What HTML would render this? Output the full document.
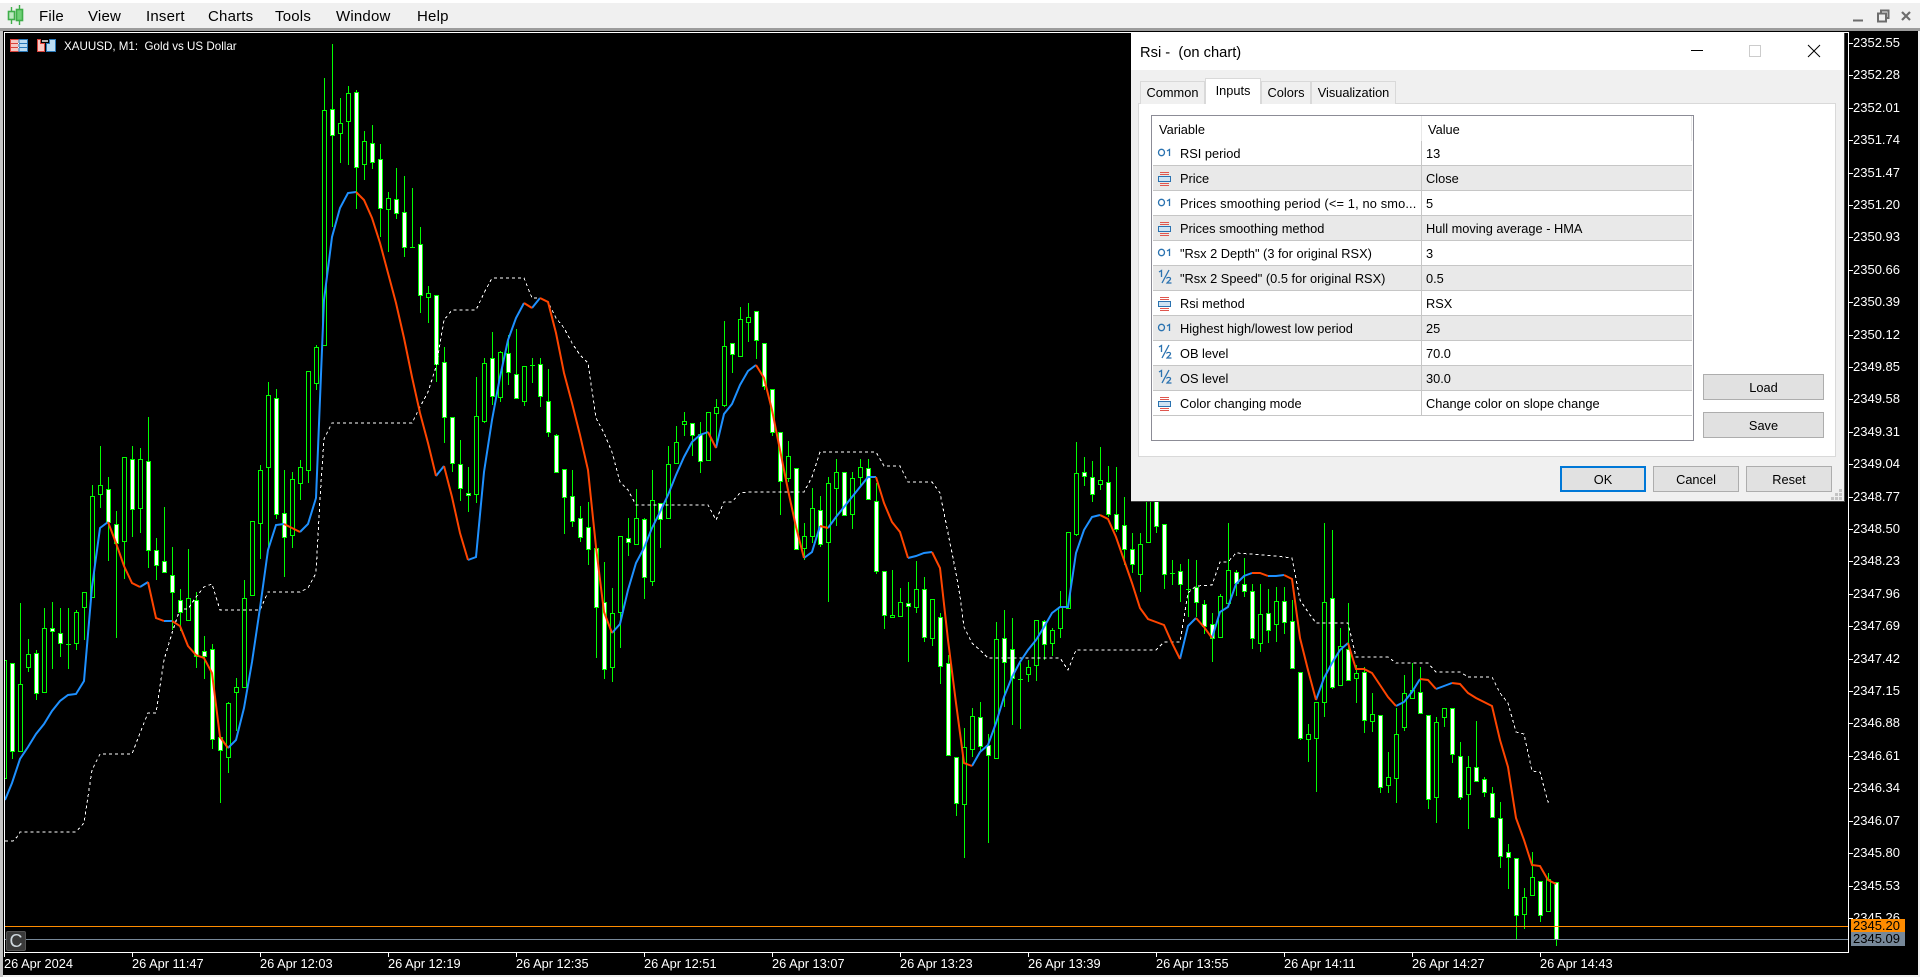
<!DOCTYPE html>
<html>
<head>
<meta charset="utf-8">
<title>XAUUSD M1</title>
<style>
html,body{margin:0;padding:0;width:1920px;height:977px;overflow:hidden;background:#f0f0f0;font-family:"Liberation Sans",sans-serif}
.a{position:absolute}
.m{position:absolute;top:8px;font-size:15px;line-height:18px;color:#000;letter-spacing:.2px}
.p{position:absolute;left:1853px;font-size:13px;line-height:14px;color:#fff;white-space:pre}
.pt{position:absolute;left:1849px;width:4px;height:1px;background:#fff}
.t{position:absolute;top:957px;font-size:12.8px;line-height:14px;color:#fff;white-space:pre}
.tt{position:absolute;top:953px;width:1px;height:4px;background:#fff}
.r{position:absolute;left:1153px;width:539px;height:24px;border-bottom:1px solid #c6c6c6;font-size:12.8px;line-height:24px;color:#000;white-space:pre}
.r .n{position:absolute;left:27px;top:1px}
.r .v{position:absolute;left:273px;top:1px}
.r svg{position:absolute;left:4px;top:2px}
.r svg.o{top:3px}
.r svg.h{top:0}
.g{background:#e9e9e9}
.b{position:absolute;box-sizing:border-box;background:#e1e1e1;border:1px solid #adadad;font-size:12.8px;line-height:26px;text-align:center;color:#000}
.tab{position:absolute;box-sizing:border-box;border:1px solid #d9d9d9;border-bottom:none;font-size:12.8px;text-align:center;color:#000;background:#f0f0f0}
</style>
</head>
<body>
<div class="a" style="left:0;top:0;width:1920px;height:3px;background:#fff"></div>
<div class="a" style="left:0;top:28px;width:1920px;height:3px;background:#9c9c9c"></div>
<div class="a" style="left:0;top:31px;width:1918px;height:944px;background:#000"></div>
<div class="a" style="left:0;top:31px;width:3px;height:946px;background:#c4c4c4"></div>

<!-- menu -->
<svg class="a" style="left:6px;top:3px" width="20" height="24" viewBox="0 0 20 24"><path d="M5.5 4V21M13.5 2V22" stroke="#3fae49" stroke-width="1.4" fill="none"/><rect x="2.5" y="8.5" width="6" height="8" fill="#bfe8c2" stroke="#3fae49" stroke-width="1.6"/><rect x="10.5" y="6.5" width="6" height="11" fill="#6fcf76" stroke="#3fae49" stroke-width="1.6"/></svg>
<div class="m" style="left:39px">File</div>
<div class="m" style="left:88px">View</div>
<div class="m" style="left:146px">Insert</div>
<div class="m" style="left:208px">Charts</div>
<div class="m" style="left:275px">Tools</div>
<div class="m" style="left:336px">Window</div>
<div class="m" style="left:417px">Help</div>
<svg class="a" style="left:1850px;top:5px" width="66" height="20" viewBox="0 0 66 20"><path d="M3 15.5H13" stroke="#6d6d6d" stroke-width="2" fill="none"/><path d="M28 8.5H36V16.5H28ZM31 8V5.5H38.5V13H36" stroke="#6d6d6d" stroke-width="2" fill="none"/><path d="M52 7L60 15M60 7L52 15" stroke="#6d6d6d" stroke-width="2.2" fill="none"/></svg>

<!-- chart -->
<svg class="a" style="left:0;top:0" width="1920" height="977" viewBox="0 0 1920 977">
<path fill="none" stroke="#0f0" stroke-width="1" shape-rendering="crispEdges" d="M4.5 645V790M12.5 663V759M20.5 603V751M28.5 639V672M36.5 650V700M44.5 608V692M52.5 602V669M60.5 608V657M68.5 608V669M66 644.5h5M76.5 610V650M84.5 592V640M92.5 485V597M100.5 446V508M108.5 477V561M116.5 511V638M124.5 457V579M132.5 446V537M140.5 448V533M148.5 417V568M156.5 538V580M164.5 507V572M172.5 547V630M180.5 589V631M188.5 549V620M196.5 592V668M204.5 636V679M212.5 644V749M220.5 737V803M228.5 702V773M236.5 678V731M244.5 580V687M252.5 521V595M260.5 465V559M268.5 382V550M276.5 389V519M284.5 470V577M292.5 472V548M300.5 460V500M308.5 371V483M316.5 345V390M324.5 78V345M332.5 44V227M340.5 98V163M348.5 86V165M356.5 90V209M364.5 131V180M372.5 125V169M380.5 144V237M388.5 192V252M396.5 168V219M404.5 176V257M412.5 188V248M410 247.5h5M420.5 227V313M428.5 286V323M436.5 295V382M444.5 347V443M452.5 417V472M460.5 440V501M468.5 467V512M476.5 377V503M484.5 358V423M492.5 332V405M500.5 351V402M508.5 335V385M516.5 329V398M524.5 366V406M532.5 358V383M530 365.5h5M540.5 358V407M548.5 369V437M556.5 434V472M564.5 469V534M572.5 470V527M580.5 506V542M588.5 502V565M596.5 548V658M604.5 562V679M612.5 588V682M620.5 536V648M628.5 518V556M636.5 489V544M644.5 518V599M652.5 470V586M660.5 503V548M668.5 446V518M676.5 426V463M684.5 412V436M692.5 423V456M700.5 422V473M708.5 412V460M716.5 399V448M724.5 321V407M732.5 343V373M740.5 307V356M748.5 303V342M756.5 311V359M764.5 343V390M772.5 389V436M780.5 432V515M788.5 441V482M796.5 468V549M804.5 523V560M812.5 488V543M820.5 496V547M828.5 477V602M836.5 459V526M844.5 472V515M852.5 472V529M860.5 459V486M868.5 459V499M876.5 483V574M884.5 571V629M892.5 570V616M900.5 588V617M908.5 582V662M916.5 561V613M924.5 577V642M932.5 599V646M940.5 613V684M948.5 655V755M956.5 757V816M964.5 728V858M972.5 708V757M980.5 702V752M988.5 734V843M996.5 622V758M1004.5 610V707M1012.5 618V725M1020.5 663V729M1018 679.5h5M1028.5 660V682M1036.5 620V681M1044.5 620V660M1052.5 628V656M1060.5 591V638M1068.5 532V608M1076.5 442V536M1084.5 457V486M1092.5 461V502M1100.5 447V490M1108.5 466V517M1116.5 467V532M1124.5 497V565M1132.5 533V573M1140.5 533V592M1148.5 477V542M1156.5 480V533M1164.5 524V589M1172.5 560V585M1170 573.5h5M1180.5 564V602M1188.5 559V617M1186 589.5h5M1196.5 560V617M1204.5 600V634M1212.5 613V662M1220.5 594V638M1228.5 523V603M1236.5 570V596M1244.5 558V597M1252.5 584V649M1260.5 584V652M1268.5 589V643M1276.5 587V642M1284.5 587V634M1292.5 600V668M1300.5 672V740M1308.5 724V762M1316.5 702V792M1324.5 523V717M1332.5 530V689M1340.5 628V685M1348.5 603V680M1356.5 665V703M1364.5 667V733M1372.5 693V732M1380.5 715V793M1388.5 752V793M1396.5 708V803M1404.5 675V731M1412.5 663V698M1420.5 667V713M1428.5 715V809M1436.5 717V823M1444.5 708V727M1452.5 708V763M1460.5 742V800M1468.5 756V829M1476.5 721V782M1484.5 777V797M1492.5 787V817M1500.5 802V868M1508.5 844V889M1516.5 858V939M1524.5 888V929M1532.5 852V895M1540.5 881V922M1548.5 873V911M1556.5 882V946"/>
<path fill="#000" stroke="#0f0" stroke-width="1" shape-rendering="crispEdges" d="M2.5 660.5h4v118h-4zM18.5 684.5h4v67h-4zM26.5 654.5h4v13h-4zM42.5 628.5h4v64h-4zM74.5 612.5h4v31h-4zM82.5 592.5h4v15h-4zM90.5 496.5h4v101h-4zM98.5 485.5h4v9h-4zM122.5 457.5h4v84h-4zM138.5 459.5h4v49h-4zM186.5 598.5h4v22h-4zM226.5 703.5h4v54h-4zM234.5 687.5h4v5h-4zM242.5 598.5h4v89h-4zM250.5 521.5h4v74h-4zM258.5 470.5h4v53h-4zM266.5 395.5h4v72h-4zM290.5 479.5h4v56h-4zM298.5 467.5h4v16h-4zM306.5 371.5h4v99h-4zM314.5 347.5h4v36h-4zM322.5 110.5h4v235h-4zM338.5 123.5h4v10h-4zM346.5 93.5h4v28h-4zM362.5 141.5h4v23h-4zM386.5 198.5h4v11h-4zM426.5 293.5h4v4h-4zM474.5 416.5h4v78h-4zM482.5 363.5h4v58h-4zM498.5 352.5h4v45h-4zM522.5 366.5h4v35h-4zM610.5 613.5h4v54h-4zM618.5 536.5h4v76h-4zM634.5 518.5h4v26h-4zM650.5 500.5h4v81h-4zM666.5 464.5h4v54h-4zM674.5 442.5h4v21h-4zM682.5 421.5h4v3h-4zM706.5 412.5h4v48h-4zM714.5 407.5h4v6h-4zM722.5 346.5h4v59h-4zM738.5 319.5h4v37h-4zM746.5 317.5h4v5h-4zM786.5 456.5h4v22h-4zM802.5 536.5h4v12h-4zM810.5 508.5h4v28h-4zM826.5 483.5h4v59h-4zM834.5 472.5h4v16h-4zM850.5 478.5h4v36h-4zM858.5 467.5h4v10h-4zM890.5 615.5h4v2h-4zM898.5 602.5h4v14h-4zM914.5 589.5h4v18h-4zM930.5 599.5h4v39h-4zM962.5 747.5h4v57h-4zM970.5 716.5h4v33h-4zM994.5 639.5h4v119h-4zM1026.5 667.5h4v7h-4zM1034.5 620.5h4v45h-4zM1050.5 630.5h4v13h-4zM1058.5 607.5h4v21h-4zM1066.5 532.5h4v76h-4zM1074.5 473.5h4v61h-4zM1098.5 480.5h4v4h-4zM1138.5 544.5h4v30h-4zM1146.5 477.5h4v65h-4zM1218.5 596.5h4v41h-4zM1226.5 570.5h4v33h-4zM1258.5 614.5h4v29h-4zM1274.5 601.5h4v23h-4zM1306.5 734.5h4v5h-4zM1314.5 702.5h4v36h-4zM1322.5 602.5h4v100h-4zM1338.5 646.5h4v39h-4zM1354.5 673.5h4v5h-4zM1370.5 714.5h4v7h-4zM1386.5 777.5h4v8h-4zM1394.5 734.5h4v44h-4zM1402.5 693.5h4v34h-4zM1410.5 690.5h4v8h-4zM1434.5 722.5h4v75h-4zM1442.5 708.5h4v9h-4zM1466.5 767.5h4v27h-4zM1522.5 897.5h4v17h-4zM1530.5 877.5h4v18h-4zM1546.5 879.5h4v32h-4z"/>
<path fill="#fff" stroke="#0f0" stroke-width="1" shape-rendering="crispEdges" d="M10.5 663.5h4v88h-4zM34.5 653.5h4v40h-4zM50.5 628.5h4v3h-4zM58.5 633.5h4v10h-4zM106.5 489.5h4v33h-4zM114.5 524.5h4v19h-4zM130.5 459.5h4v50h-4zM146.5 461.5h4v89h-4zM154.5 550.5h4v15h-4zM162.5 561.5h4v11h-4zM170.5 575.5h4v17h-4zM178.5 600.5h4v12h-4zM194.5 600.5h4v56h-4zM202.5 651.5h4v5h-4zM210.5 649.5h4v90h-4zM218.5 737.5h4v13h-4zM274.5 398.5h4v116h-4zM282.5 513.5h4v24h-4zM330.5 109.5h4v26h-4zM354.5 92.5h4v75h-4zM370.5 143.5h4v19h-4zM378.5 159.5h4v49h-4zM394.5 199.5h4v14h-4zM402.5 212.5h4v35h-4zM418.5 244.5h4v51h-4zM434.5 295.5h4v69h-4zM442.5 362.5h4v55h-4zM450.5 417.5h4v46h-4zM458.5 464.5h4v24h-4zM466.5 493.5h4v2h-4zM490.5 358.5h4v38h-4zM506.5 353.5h4v19h-4zM514.5 374.5h4v24h-4zM538.5 364.5h4v32h-4zM546.5 401.5h4v31h-4zM554.5 435.5h4v37h-4zM562.5 469.5h4v28h-4zM570.5 496.5h4v25h-4zM578.5 518.5h4v19h-4zM586.5 527.5h4v22h-4zM594.5 548.5h4v59h-4zM602.5 602.5h4v67h-4zM626.5 538.5h4v4h-4zM642.5 519.5h4v58h-4zM658.5 503.5h4v16h-4zM690.5 423.5h4v12h-4zM698.5 434.5h4v27h-4zM730.5 343.5h4v11h-4zM754.5 311.5h4v29h-4zM762.5 343.5h4v43h-4zM770.5 389.5h4v43h-4zM778.5 432.5h4v49h-4zM794.5 468.5h4v81h-4zM818.5 510.5h4v34h-4zM842.5 472.5h4v43h-4zM866.5 468.5h4v31h-4zM874.5 501.5h4v70h-4zM882.5 571.5h4v44h-4zM906.5 603.5h4v3h-4zM922.5 589.5h4v48h-4zM938.5 617.5h4v49h-4zM946.5 663.5h4v92h-4zM954.5 757.5h4v46h-4zM978.5 717.5h4v29h-4zM986.5 745.5h4v10h-4zM1002.5 638.5h4v24h-4zM1010.5 649.5h4v29h-4zM1042.5 621.5h4v23h-4zM1082.5 472.5h4v4h-4zM1090.5 477.5h4v17h-4zM1106.5 482.5h4v32h-4zM1114.5 514.5h4v15h-4zM1122.5 525.5h4v24h-4zM1130.5 549.5h4v15h-4zM1154.5 480.5h4v46h-4zM1162.5 524.5h4v50h-4zM1178.5 571.5h4v13h-4zM1194.5 587.5h4v15h-4zM1202.5 604.5h4v22h-4zM1210.5 624.5h4v14h-4zM1234.5 572.5h4v11h-4zM1242.5 584.5h4v7h-4zM1250.5 591.5h4v47h-4zM1266.5 613.5h4v17h-4zM1282.5 601.5h4v21h-4zM1290.5 621.5h4v47h-4zM1298.5 672.5h4v66h-4zM1330.5 598.5h4v89h-4zM1346.5 649.5h4v31h-4zM1362.5 672.5h4v48h-4zM1378.5 715.5h4v72h-4zM1418.5 692.5h4v21h-4zM1426.5 715.5h4v84h-4zM1450.5 708.5h4v46h-4zM1458.5 756.5h4v41h-4zM1474.5 767.5h4v14h-4zM1482.5 779.5h4v13h-4zM1490.5 793.5h4v24h-4zM1498.5 818.5h4v38h-4zM1506.5 852.5h4v5h-4zM1514.5 858.5h4v57h-4zM1538.5 881.5h4v34h-4zM1554.5 882.5h4v57h-4z"/>
<!-- dotted high/low line -->
<polyline fill="none" stroke="#fff" stroke-width="1" stroke-dasharray="3 3" shape-rendering="crispEdges" points="5,841 13,841 17,837 20,832 76,832 84,823 92,770 100,754 132,754 140,733 148,713 156,713 164,660 172,633 180,609 188,609 196,597 204,587 212,584 220,610 260,610 268,592 300,592 308,588 316,573 320,498 324,439 332,423 412,423 420,407 428,392 436,367 444,320 452,310 476,310 484,293 492,278 524,278 532,298 540,298 548,302 556,318 564,328 572,343 580,355 588,363 596,418 604,433 612,452 620,482 628,490 636,505 708,505 716,520 724,502 732,502 740,493 748,492 804,492 812,477 820,452 876,452 884,466 900,466 908,482 932,482 940,493 948,533 956,573 960,596 964,627 972,643 980,650 988,658 1060,658 1068,670 1076,650 1156,650 1164,642 1180,642 1188,593 1196,586 1212,585 1220,562 1228,562 1236,553 1276,556 1292,558 1300,600 1308,612 1316,623 1348,623 1356,657 1388,657 1396,663 1428,663 1436,672 1460,672 1468,677 1492,677 1500,693 1508,703 1516,732 1524,734 1532,771 1540,772 1548,802 1552,802"/>
<!-- blue segments -->
<path fill="none" stroke="#1e90ff" stroke-width="2" stroke-linejoin="miter" d="M5 800L12 783 20 759 28 747 36 734 44 724 52 711 60 701 68 695 76 694 84 681 92 587 100 528 108 522M140 587L148 582M164 621L172 621M228 748L236 740 244 708 252 662 260 608 268 550 276 525 284 524M300 532L308 524 316 498 324 300 332 237 340 208 348 193 356 192M436 476L444 466M468 560L476 557 484 472 492 420 500 377 508 340 516 318 524 303M532 308L540 298M612 633L620 624 628 590 636 563 644 548 652 528 660 512 668 495 676 475 684 457 692 442 700 435 708 432M716 448L724 414 732 404 740 385 748 371 756 365M804 558L812 552 820 526M828 528L836 517 844 507 852 497 860 487 868 477 876 477M908 558L916 556 924 553 932 552M972 766L980 752 988 745 996 723 1004 697 1012 677 1020 662 1028 650 1036 640 1044 627 1052 613 1060 607 1068 607 1076 553 1084 530 1092 517 1100 515M1180 659L1188 626 1196 618M1212 638L1220 612 1228 607 1236 584 1244 576 1252 573M1268 576L1276 576 1284 575M1316 700L1324 678 1332 663 1340 650 1348 643M1396 706L1404 702 1412 692 1420 679M1436 689L1444 686 1452 683"/>
<!-- orange segments -->
<path fill="none" stroke="#ff4500" stroke-width="2" stroke-linejoin="miter" d="M108 522L116 543 124 566 132 583 140 587M148 582L156 618 164 621M172 621L180 626 188 646 196 655 204 658 212 673 220 737 228 748M284 524L292 528 300 532M356 192L364 200 372 218 380 243 388 273 396 303 404 338 412 377 420 413 428 443 436 476M444 466L452 497 460 533 468 560M524 303L532 308M540 298L548 302 556 333 564 373 572 403 580 435 588 470 596 547 604 612 612 633M708 432L716 448M756 365L764 378 772 410 780 450 788 490 796 527 804 558M820 526L828 528M876 477L884 503 892 522 900 532 908 558M932 552L940 568 948 640 956 703 964 763 972 766M1100 515L1108 519 1116 537 1124 560 1132 583 1140 608 1148 619 1156 622 1164 625 1172 643 1180 659M1196 618L1204 627 1212 638M1252 573L1260 573 1268 576M1284 575L1292 579 1300 638 1308 670 1316 700M1348 643L1356 669 1364 669 1372 673 1380 685 1388 697 1396 706M1420 679L1428 680 1436 689M1452 683L1460 684 1468 693 1476 698 1484 702 1492 706 1500 740 1508 767 1516 818 1524 840 1532 865 1540 866 1548 880 1556 884"/>
</svg>

<!-- frame overlays -->
<div class="a" style="left:0;top:31px;width:3px;height:946px;background:#c4c4c4"></div>
<div class="a" style="left:3px;top:31px;width:1px;height:944px;background:#000"></div>
<div class="a" style="left:5px;top:926px;width:1843px;height:1px;background:#ff8c00"></div>
<div class="a" style="left:5px;top:939px;width:1843px;height:1px;background:#778899"></div>
<div class="a" style="left:4px;top:32px;width:1845px;height:1px;background:#fff"></div>
<div class="a" style="left:4px;top:32px;width:1px;height:921px;background:#fff"></div>
<div class="a" style="left:4px;top:952px;width:1845px;height:1px;background:#fff"></div>
<div class="a" style="left:1848px;top:32px;width:1px;height:921px;background:#fff"></div>

<!-- chart title -->
<svg class="a" style="left:9px;top:38px" width="50" height="16" viewBox="0 0 50 16"><rect x="1.5" y="1.5" width="17" height="12" fill="#f6c7c2" stroke="#d9433b"/><rect x="10" y="1.5" width="8.5" height="12" fill="#bcdcf2" stroke="#2a78b8"/><path d="M2 5.5H18M2 9.5H18" stroke="#fff" stroke-width="1"/><path d="M2 5.5H9M2 9.5H9" stroke="#d9433b" stroke-width="1"/><path d="M10 5.5H18M10 9.5H18" stroke="#2a78b8" stroke-width="1"/><path d="M28.5 13.5V1.5H31.5V5.5H35.5V13.5Z" fill="#f9c8c3" stroke="#d9433b"/><path d="M37.5 5.5H40.5V1.5H46.5V13.5H37.5Z" fill="#bcdcf2" stroke="#2a78b8"/><rect x="33" y="2" width="6" height="2" fill="#b5b5b5"/></svg>
<div class="a" style="left:64px;top:40px;font-size:11.6px;line-height:14px;color:#fff;white-space:pre">XAUUSD, M1:  Gold vs US Dollar</div>

<!-- C button -->
<div class="a" style="left:6px;top:931px;width:20px;height:20px;box-sizing:border-box;background:#3a3a3a;border:1px solid #555;border-radius:2px;color:#cfd8de;font-size:18px;line-height:18px;text-align:center">C</div>

<!-- time axis -->
<div class="tt" style="left:4px"></div><div class="tt" style="left:132px"></div><div class="tt" style="left:260px"></div><div class="tt" style="left:388px"></div><div class="tt" style="left:516px"></div><div class="tt" style="left:644px"></div><div class="tt" style="left:772px"></div><div class="tt" style="left:900px"></div><div class="tt" style="left:1028px"></div><div class="tt" style="left:1156px"></div><div class="tt" style="left:1284px"></div><div class="tt" style="left:1412px"></div><div class="tt" style="left:1540px"></div>
<div class="t" style="left:4px">26 Apr 2024</div>
<div class="t" style="left:132px">26 Apr 11:47</div>
<div class="t" style="left:260px">26 Apr 12:03</div>
<div class="t" style="left:388px">26 Apr 12:19</div>
<div class="t" style="left:516px">26 Apr 12:35</div>
<div class="t" style="left:644px">26 Apr 12:51</div>
<div class="t" style="left:772px">26 Apr 13:07</div>
<div class="t" style="left:900px">26 Apr 13:23</div>
<div class="t" style="left:1028px">26 Apr 13:39</div>
<div class="t" style="left:1156px">26 Apr 13:55</div>
<div class="t" style="left:1284px">26 Apr 14:11</div>
<div class="t" style="left:1412px">26 Apr 14:27</div>
<div class="t" style="left:1540px">26 Apr 14:43</div>

<!-- price axis -->
<div class="pt" style="top:43px"></div><div class="p" style="top:36px">2352.55</div>
<div class="pt" style="top:75px"></div><div class="p" style="top:68px">2352.28</div>
<div class="pt" style="top:108px"></div><div class="p" style="top:101px">2352.01</div>
<div class="pt" style="top:140px"></div><div class="p" style="top:133px">2351.74</div>
<div class="pt" style="top:173px"></div><div class="p" style="top:166px">2351.47</div>
<div class="pt" style="top:205px"></div><div class="p" style="top:198px">2351.20</div>
<div class="pt" style="top:237px"></div><div class="p" style="top:230px">2350.93</div>
<div class="pt" style="top:270px"></div><div class="p" style="top:263px">2350.66</div>
<div class="pt" style="top:302px"></div><div class="p" style="top:295px">2350.39</div>
<div class="pt" style="top:335px"></div><div class="p" style="top:328px">2350.12</div>
<div class="pt" style="top:367px"></div><div class="p" style="top:360px">2349.85</div>
<div class="pt" style="top:399px"></div><div class="p" style="top:392px">2349.58</div>
<div class="pt" style="top:432px"></div><div class="p" style="top:425px">2349.31</div>
<div class="pt" style="top:464px"></div><div class="p" style="top:457px">2349.04</div>
<div class="pt" style="top:497px"></div><div class="p" style="top:490px">2348.77</div>
<div class="pt" style="top:529px"></div><div class="p" style="top:522px">2348.50</div>
<div class="pt" style="top:561px"></div><div class="p" style="top:554px">2348.23</div>
<div class="pt" style="top:594px"></div><div class="p" style="top:587px">2347.96</div>
<div class="pt" style="top:626px"></div><div class="p" style="top:619px">2347.69</div>
<div class="pt" style="top:659px"></div><div class="p" style="top:652px">2347.42</div>
<div class="pt" style="top:691px"></div><div class="p" style="top:684px">2347.15</div>
<div class="pt" style="top:723px"></div><div class="p" style="top:716px">2346.88</div>
<div class="pt" style="top:756px"></div><div class="p" style="top:749px">2346.61</div>
<div class="pt" style="top:788px"></div><div class="p" style="top:781px">2346.34</div>
<div class="pt" style="top:821px"></div><div class="p" style="top:814px">2346.07</div>
<div class="pt" style="top:853px"></div><div class="p" style="top:846px">2345.80</div>
<div class="pt" style="top:886px"></div><div class="p" style="top:879px">2345.53</div>
<div class="pt" style="top:918px"></div><div class="p" style="top:911px">2345.26</div>
<div class="a" style="left:1851px;top:919px;width:54px;height:13px;background:#ff8c00;color:#000;font-size:13px;line-height:14px;padding-left:2px;box-sizing:border-box">2345.20</div>
<div class="a" style="left:1851px;top:932px;width:54px;height:14px;background:#778899;color:#000;font-size:13px;line-height:14px;padding-left:2px;box-sizing:border-box">2345.09</div>

<!-- dialog -->
<div class="a" style="left:1131px;top:33px;width:713px;height:468px;background:#f0f0f0;border-right:1px solid #444;border-bottom:1px solid #444"></div>
<div class="a" style="left:1131px;top:33px;width:713px;height:37px;background:#fff"></div>
<div class="a" style="left:1140px;top:44px;font-size:14.7px;line-height:18px;color:#000;white-space:pre">Rsi -  (on chart)</div>
<svg class="a" style="left:1680px;top:40px" width="150" height="24" viewBox="0 0 150 24"><path d="M11 10.5H23" stroke="#000" stroke-width="1"/><rect x="69.5" y="5.5" width="11" height="11" fill="none" stroke="#ccc"/><path d="M128 5L140 17M140 5L128 17" stroke="#000" stroke-width="1" fill="none"/></svg>

<div class="a" style="left:1138px;top:103px;width:698px;height:354px;box-sizing:border-box;background:#fff;border:1px solid #d9d9d9"></div>
<div class="tab" style="left:1140px;top:81px;width:65px;height:23px;line-height:22px">Common</div>
<div class="tab" style="left:1261px;top:81px;width:50px;height:23px;line-height:22px">Colors</div>
<div class="tab" style="left:1311px;top:81px;width:85px;height:23px;line-height:22px">Visualization</div>
<div class="tab" style="left:1205px;top:78px;width:56px;height:26px;line-height:23px;background:#fff">Inputs</div>

<div class="a" style="left:1151px;top:115px;width:543px;height:326px;box-sizing:border-box;background:#fff;border:1px solid #8c8c96"></div>
<div class="a" style="left:1159px;top:122px;font-size:12.8px;line-height:15px;color:#000">Variable</div>
<div class="a" style="left:1428px;top:122px;font-size:12.8px;line-height:15px;color:#000">Value</div>

<div class="r" style="top:141px"><svg class="o" width="16" height="20" viewBox="0 0 16 20"><ellipse cx="4.5" cy="8.5" rx="3" ry="3.2" fill="none" stroke="#2a72b0" stroke-width="1.3"/><path d="M10 7L12.5 5.5V12" fill="none" stroke="#2a72b0" stroke-width="1.3"/></svg><span class="n">RSI period</span><span class="v">13</span></div>
<div class="r g" style="top:166px"><svg width="16" height="20" viewBox="0 0 16 20"><path d="M3 4.5H12M3 6.5H12M3 15.5H12M3 17.5H12" stroke="#e0564e" stroke-width="1"/><rect x="1.5" y="8.5" width="12" height="5" fill="#cfe4f4" stroke="#2a72b0"/></svg><span class="n">Price</span><span class="v">Close</span></div>
<div class="r" style="top:191px"><svg class="o" width="16" height="20" viewBox="0 0 16 20"><ellipse cx="4.5" cy="8.5" rx="3" ry="3.2" fill="none" stroke="#2a72b0" stroke-width="1.3"/><path d="M10 7L12.5 5.5V12" fill="none" stroke="#2a72b0" stroke-width="1.3"/></svg><span class="n" style="letter-spacing:.15px">Prices smoothing period (&lt;= 1, no smo...</span><span class="v">5</span></div>
<div class="r g" style="top:216px"><svg width="16" height="20" viewBox="0 0 16 20"><path d="M3 4.5H12M3 6.5H12M3 15.5H12M3 17.5H12" stroke="#e0564e" stroke-width="1"/><rect x="1.5" y="8.5" width="12" height="5" fill="#cfe4f4" stroke="#2a72b0"/></svg><span class="n">Prices smoothing method</span><span class="v">Hull moving average - HMA</span></div>
<div class="r" style="top:241px"><svg class="o" width="16" height="20" viewBox="0 0 16 20"><ellipse cx="4.5" cy="8.5" rx="3" ry="3.2" fill="none" stroke="#2a72b0" stroke-width="1.3"/><path d="M10 7L12.5 5.5V12" fill="none" stroke="#2a72b0" stroke-width="1.3"/></svg><span class="n">"Rsx 2 Depth" (3 for original RSX)</span><span class="v">3</span></div>
<div class="r g" style="top:266px"><svg class="h" width="16" height="20" viewBox="0 0 16 20"><path d="M2 6L4.5 4.5V11M12 4L5 17" fill="none" stroke="#2a72b0" stroke-width="1.3"/><path d="M9.5 12.5C10 11 14 11 13.5 13C13 14.5 11 15.5 10 17H14.5" fill="none" stroke="#2a72b0" stroke-width="1.2"/></svg><span class="n">"Rsx 2 Speed" (0.5 for original RSX)</span><span class="v">0.5</span></div>
<div class="r" style="top:291px"><svg width="16" height="20" viewBox="0 0 16 20"><path d="M3 4.5H12M3 6.5H12M3 15.5H12M3 17.5H12" stroke="#e0564e" stroke-width="1"/><rect x="1.5" y="8.5" width="12" height="5" fill="#cfe4f4" stroke="#2a72b0"/></svg><span class="n">Rsi method</span><span class="v">RSX</span></div>
<div class="r g" style="top:316px"><svg class="o" width="16" height="20" viewBox="0 0 16 20"><ellipse cx="4.5" cy="8.5" rx="3" ry="3.2" fill="none" stroke="#2a72b0" stroke-width="1.3"/><path d="M10 7L12.5 5.5V12" fill="none" stroke="#2a72b0" stroke-width="1.3"/></svg><span class="n">Highest high/lowest low period</span><span class="v">25</span></div>
<div class="r" style="top:341px"><svg class="h" width="16" height="20" viewBox="0 0 16 20"><path d="M2 6L4.5 4.5V11M12 4L5 17" fill="none" stroke="#2a72b0" stroke-width="1.3"/><path d="M9.5 12.5C10 11 14 11 13.5 13C13 14.5 11 15.5 10 17H14.5" fill="none" stroke="#2a72b0" stroke-width="1.2"/></svg><span class="n">OB level</span><span class="v">70.0</span></div>
<div class="r g" style="top:366px"><svg class="h" width="16" height="20" viewBox="0 0 16 20"><path d="M2 6L4.5 4.5V11M12 4L5 17" fill="none" stroke="#2a72b0" stroke-width="1.3"/><path d="M9.5 12.5C10 11 14 11 13.5 13C13 14.5 11 15.5 10 17H14.5" fill="none" stroke="#2a72b0" stroke-width="1.2"/></svg><span class="n">OS level</span><span class="v">30.0</span></div>
<div class="r" style="top:391px"><svg width="16" height="20" viewBox="0 0 16 20"><path d="M3 4.5H12M3 6.5H12M3 15.5H12M3 17.5H12" stroke="#e0564e" stroke-width="1"/><rect x="1.5" y="8.5" width="12" height="5" fill="#cfe4f4" stroke="#2a72b0"/></svg><span class="n">Color changing mode</span><span class="v">Change color on slope change</span></div>
<div class="a" style="left:1421px;top:141px;width:1px;height:275px;background:#c6c6c6"></div>
<div class="a" style="left:1421px;top:116px;width:1px;height:25px;background:#e8e8e8"></div>
<div class="a" style="left:1691px;top:116px;width:1px;height:25px;background:#e8e8e8"></div>

<div class="b" style="left:1703px;top:374px;width:121px;height:26px">Load</div>
<div class="b" style="left:1703px;top:412px;width:121px;height:26px">Save</div>
<div class="b" style="left:1560px;top:466px;width:86px;height:26px;border:2px solid #0078d7;line-height:24px">OK</div>
<div class="b" style="left:1653px;top:466px;width:86px;height:26px">Cancel</div>
<div class="b" style="left:1746px;top:466px;width:86px;height:26px">Reset</div>
<svg class="a" style="left:1831px;top:488px" width="13" height="13" viewBox="0 0 13 13"><path d="M8 1h3v3H8zM4 5h3v3H4zM8 5h3v3H8zM0 9h3v3H0zM4 9h3v3H4zM8 9h3v3H8z" fill="#c4c4c4"/></svg>
</body>
</html>
